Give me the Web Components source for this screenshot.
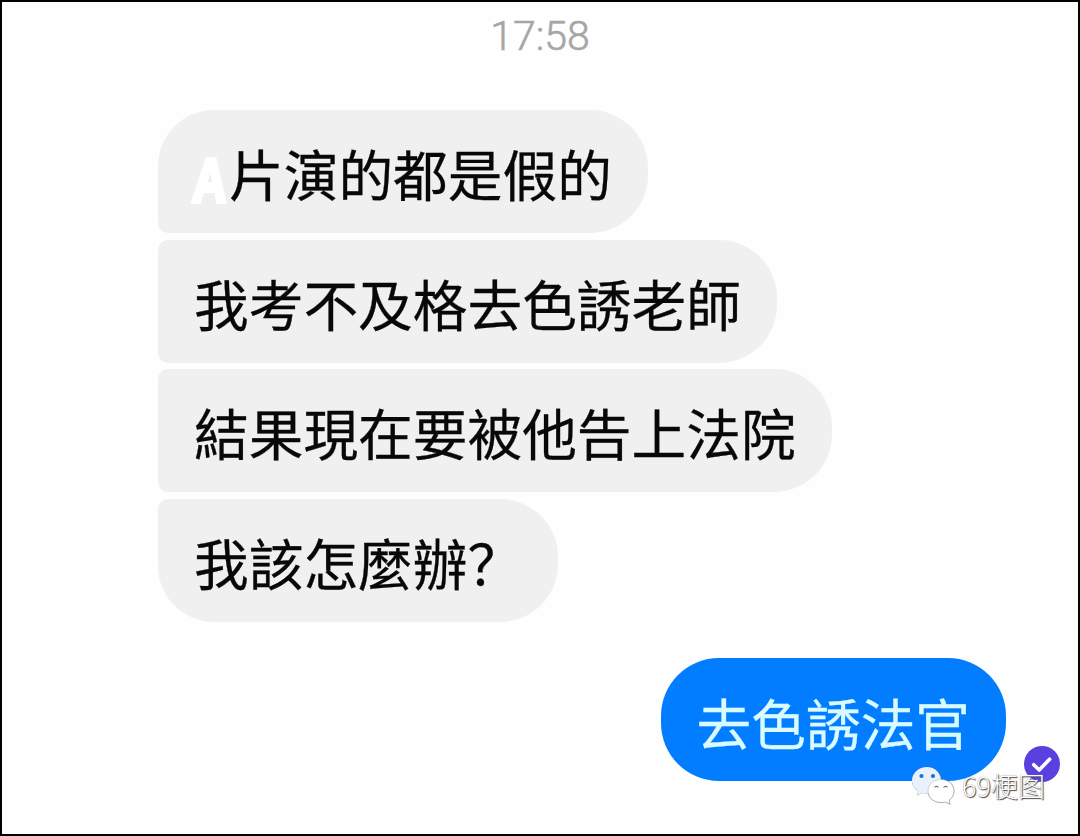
<!DOCTYPE html>
<html lang="zh-CN">
<head>
<meta charset="utf-8">
<title>Chat</title>
<style>
    body{
        margin: 0;
    }
</style>
</head>
<body>
<chat-screen>
    <chat-time>17:58</chat-time>
    <chat-bubble pos="first"><chat-letter>A</chat-letter>片演的都是假的</chat-bubble>
    <chat-bubble>我考不及格去色誘老師</chat-bubble>
    <chat-bubble>結果現在要被他告上法院</chat-bubble>
    <chat-bubble pos="last">我該怎麼辦？</chat-bubble>
    <chat-bubble mine>去色誘法官</chat-bubble>
    <seen-badge slot="over"></seen-badge>
    <chat-watermark slot="over">69梗图</chat-watermark>
</chat-screen>

<script>
function define(name, html){
    const template = document.createElement("template");
    template.innerHTML = html;
    customElements.define(name, class extends HTMLElement{
        constructor(){
            super();
            this.attachShadow({ mode: "open" });
            this.shadowRoot.appendChild(template.content.cloneNode(true));
        }
    });
}

define("chat-screen", `
<style>
    :host{
        display: block;
        position: relative;
        box-sizing: border-box;
        width: 1080px;
        height: 836px;
        overflow: hidden;
        border: 2px solid #000;
        background: #fefefe;
        font-family: Roboto, "Noto Sans CJK SC", sans-serif;
    }
    main{
        display: flex;
        flex-direction: column;
        align-items: flex-start;
        gap: 6.7px;
        padding: 10px 72px 0 156px;
    }
</style>
<main><slot></slot></main>
<slot name="over"></slot>
`);

define("chat-time", `
<style>
    :host{
        display: block;
        align-self: stretch;
        height: 48px;
        margin: 0 -72px 43.3px -156px;
        line-height: 48px;
        font-size: 41px;
        text-align: center;
        color: #a6a6a6;
        font-weight: 300;
        -webkit-text-stroke: .6px #a6a6a6;
    }
</style>
<slot></slot>
`);

define("chat-bubble", `
<style>
    :host{
        display: flex;
        box-sizing: border-box;
        height: 123px;
        padding: 0 36px;
        border-radius: 10px 58px 58px 10px;
        background: #f0f0f0;
        color: #080808;
        font: 54.7px/126px "Noto Sans CJK SC", sans-serif;
        -webkit-text-stroke: .3px currentColor;
        white-space: nowrap;
    }
    :host([pos="first"]){
        border-top-left-radius: 56px;
    }
    :host([pos="last"]){
        border-bottom-left-radius: 56px;
    }
    :host([mine]){
        align-self: flex-end;
        margin-top: 29.6px;
        border-radius: 58px;
        background: #027dff;
        color: #d9fbff;
        line-height: 127px;
    }
</style>
<slot></slot>
`);

define("chat-letter", `
<style>
    :host{
        display: block;
        width: 35px;
        color: #fff;
        font: 700 62px/141px "Liberation Sans", sans-serif;
    }
    span{
        display: block;
        width: 45px;
        transform: translateX(-2px) skewX(-3deg) scaleX(.77);
        transform-origin: 0 60%;
        -webkit-text-stroke: 4px #fff;
    }
</style>
<span><slot></slot></span>
`);

define("seen-badge", `
<style>
    :host{
        position: absolute;
        left: 1022px;
        top: 744px;
        width: 36px;
        height: 36px;
    }
    svg{
        display: block;
    }
</style>
<svg width="36" height="36" viewBox="0 0 36 36">
    <circle cx="18" cy="18" r="18" fill="#5b40e0"/>
    <path d="M9.700 18.700l5.500 5.300 10.400-10.800" fill="none" stroke="#fff" stroke-width="3.600" stroke-linecap="round" stroke-linejoin="round"/>
</svg>
`);

define("chat-watermark", `
<style>
    :host{
        position: absolute;
        left: 908px;
        top: 763px;
        display: flex;
        align-items: flex-start;
        gap: 7px;
        color: #fff;
        font: 300 27px/42px "Noto Sans CJK SC", sans-serif;
        text-shadow: 1px 1px 1px #444, 0 0 1px #777;
        white-space: nowrap;
    }
    svg{
        display: block;
        filter: drop-shadow(.6px .8px .5px #555);
    }
</style>
<svg width="45" height="42" viewBox="0 0 45 42">
    <path d="M17 2C8.700 2 2 8 2 15.500c0 4.500 2.400 8.200 6.200 10.700L7 30.500l5.500-2.800c1.600.4 3 .6 4.800.5C25 28 31 22.500 31 15.500 31 8 25 2 17 2z" fill="#e9f2fc"/>
    <circle cx="11.500" cy="11" r="2.100" fill="#1675cf"/>
    <circle cx="23" cy="11" r="2.100" fill="#1675cf"/>
    <path d="M31 14.500c-7.300 0-13 5-13 11.500s5.700 11.500 13 11.500c1.500 0 3-.2 4.300-.7l4.800 2.500-1.100-4.100c3.100-2.100 5-5.400 5-9.200 0-6.500-5.700-11.500-13-11.500z" fill="#fff" stroke="#aaa" stroke-width=".5"/>
    <path d="M24.500 22.300q2-1.800 4 0M33.500 22.300q2-1.800 4 0" fill="none" stroke="#777" stroke-width="1.100"/>
</svg>
<slot></slot>
`);
</script>
</body>
</html>
